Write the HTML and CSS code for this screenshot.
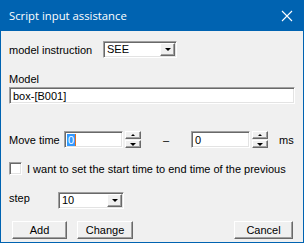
FILE: index.html
```html
<!DOCTYPE html>
<html lang="en">
<head>
    <meta charset="UTF-8">
    <title>Script input assistance</title>
    <link rel="stylesheet" href="styles.css">
</head>
<body>
    <div class="window">
        <div class="titlebar">
            <span class="title">Script input assistance</span>
            <svg class="close" width="12" height="12" viewBox="0 0 12 12">
                <path d="M1 1 L11 11 M11 1 L1 11" stroke="#fff" stroke-width="1.1" fill="none"/>
            </svg>
        </div>

        <div class="content">
            <div class="row row-instruction">
                <span class="label label-instruction">model instruction</span>
                <div class="combo combo-instruction">
                    <span class="combo-text">SEE</span>
                    <span class="drop"><span class="arrow"></span></span>
                </div>
            </div>

            <div class="label label-model">Model</div>
            <div class="field field-model">box-[B001]</div>

            <div class="row row-time">
                <span class="label label-time">Move time</span>
                <div class="field field-spin"><span class="selected">0</span></div>
                <div class="spin">
                    <span class="spin-btn"><span class="arrow-up"></span></span>
                    <span class="spin-btn"><span class="arrow"></span></span>
                </div>
                <span class="dash">&ndash;</span>
                <div class="field field-spin">0</div>
                <div class="spin">
                    <span class="spin-btn"><span class="arrow-up"></span></span>
                    <span class="spin-btn"><span class="arrow"></span></span>
                </div>
                <span class="label label-ms">ms</span>
            </div>

            <div class="row row-check">
                <span class="checkbox"></span>
                <span class="label">I want to set the start time to end time of the previous</span>
            </div>

            <div class="row row-step">
                <span class="label label-step">step</span>
                <div class="combo combo-step">
                    <span class="combo-text">10</span>
                    <span class="drop"><span class="arrow"></span></span>
                </div>
            </div>

            <div class="row row-buttons">
                <button class="btn btn-add">Add</button>
                <button class="btn btn-change">Change</button>
                <button class="btn btn-cancel">Cancel</button>
            </div>
        </div>
    </div>
</body>
</html>
```

FILE: styles.css
```css
body {
    margin: 0;
    padding: 0;
    background-color: #f0f0f0;
}

.window {
    width: 304px;
    height: 243px;
    box-sizing: border-box;
    border: 1px solid #0063b1;
    border-top: none;
    background-color: #f0f0f0;
    font-family: "Liberation Sans", Arial, sans-serif;
    font-size: 11px;
    color: #000;
}

.titlebar {
    height: 31px;
    margin: 0 -1px;
    background-color: #0063b1;
    color: #fff;
    display: flex;
    align-items: center;
    justify-content: space-between;
    padding: 0 11px 0 9px;
}

.title {
    font-family: "Open Sans", "Noto Sans", sans-serif;
    font-size: 11.3px;
}

.content {
    padding: 0 0 0 8px;
}

.row {
    display: flex;
    align-items: center;
}

.row-instruction {
    margin-top: 10px;
    height: 17px;
}

.label-instruction {
    width: 94px;
}

/* sunken edit box */
.field {
    height: 17px;
    box-sizing: border-box;
    background: #fff;
    border: 1px solid;
    border-color: #a0a0a0 #fff #fff #a0a0a0;
    box-shadow: inset 1px 1px #696969, inset -1px -1px #e3e3e3;
    padding: 2px 0 0 3px;
    line-height: 12px;
    white-space: nowrap;
}

.label-model {
    margin-top: 15px;
    height: 14px;
}

.field-model {
    width: 286px;
}

.combo {
    height: 17px;
    box-sizing: border-box;
    background: #fff;
    border: 1px solid;
    border-color: #a0a0a0 #fff #fff #a0a0a0;
    box-shadow: inset 1px 1px #696969, inset -1px -1px #e3e3e3;
    display: flex;
    align-items: stretch;
    justify-content: space-between;
    padding: 1px 1px 1px 3px;
}

.combo-text {
    line-height: 13px;
}

.combo-instruction {
    width: 74px;
}

.combo-step {
    width: 66px;
}

.drop, .spin-btn {
    box-sizing: border-box;
    background: #f0f0f0;
    border: 1px solid;
    border-color: #fff #696969 #696969 #fff;
    box-shadow: inset -1px -1px #a0a0a0;
    display: flex;
    align-items: center;
    justify-content: center;
}

.drop {
    width: 15px;
}

.arrow {
    width: 0;
    height: 0;
    border-left: 3px solid transparent;
    border-right: 3px solid transparent;
    border-top: 3px solid #000;
}

.arrow-up {
    width: 0;
    height: 0;
    border-left: 2px solid transparent;
    border-right: 2px solid transparent;
    border-bottom: 2px solid #000;
}

.row-time {
    margin-top: 27px;
    height: 17px;
}

.label-time {
    width: 55px;
}

.field-spin {
    width: 59px;
}

.selected {
    background: #3399ff;
    color: #fff;
    border-right: 1px solid #e07020;
    padding: 0 1px;
    margin-left: -1px;
}

.spin {
    margin-left: 2px;
    width: 16px;
    height: 17px;
    display: flex;
    flex-direction: column;
    gap: 1px;
}

.spin-btn {
    height: 8px;
}

.dash {
    width: 50px;
    text-align: center;
}

.label-ms {
    margin-left: 11px;
}

.row-check {
    margin-top: 14px;
    height: 13px;
}

.checkbox {
    width: 13px;
    height: 13px;
    box-sizing: border-box;
    background: #fff;
    border: 1px solid;
    border-color: #a0a0a0 #fff #fff #a0a0a0;
    box-shadow: inset 1px 1px #696969, inset -1px -1px #e3e3e3;
    margin-right: 5px;
}

.row-step {
    margin-top: 17px;
    height: 17px;
}

.label-step {
    width: 49px;
    align-self: flex-start;
}

.row-buttons {
    margin-top: 12px;
    padding-left: 3px;
}

.btn {
    height: 18px;
    box-sizing: border-box;
    background: #f0f0f0;
    border: 1px solid;
    border-color: #fff #696969 #696969 #fff;
    box-shadow: inset -1px -1px #a0a0a0;
    font-family: "Liberation Sans", Arial, sans-serif;
    font-size: 11px;
    padding: 0;
    color: #000;
}

.btn-add {
    width: 55px;
}

.btn-change {
    width: 56px;
    margin-left: 10px;
}

.btn-cancel {
    width: 59px;
    margin-left: auto;
    margin-right: 10px;
}
```
